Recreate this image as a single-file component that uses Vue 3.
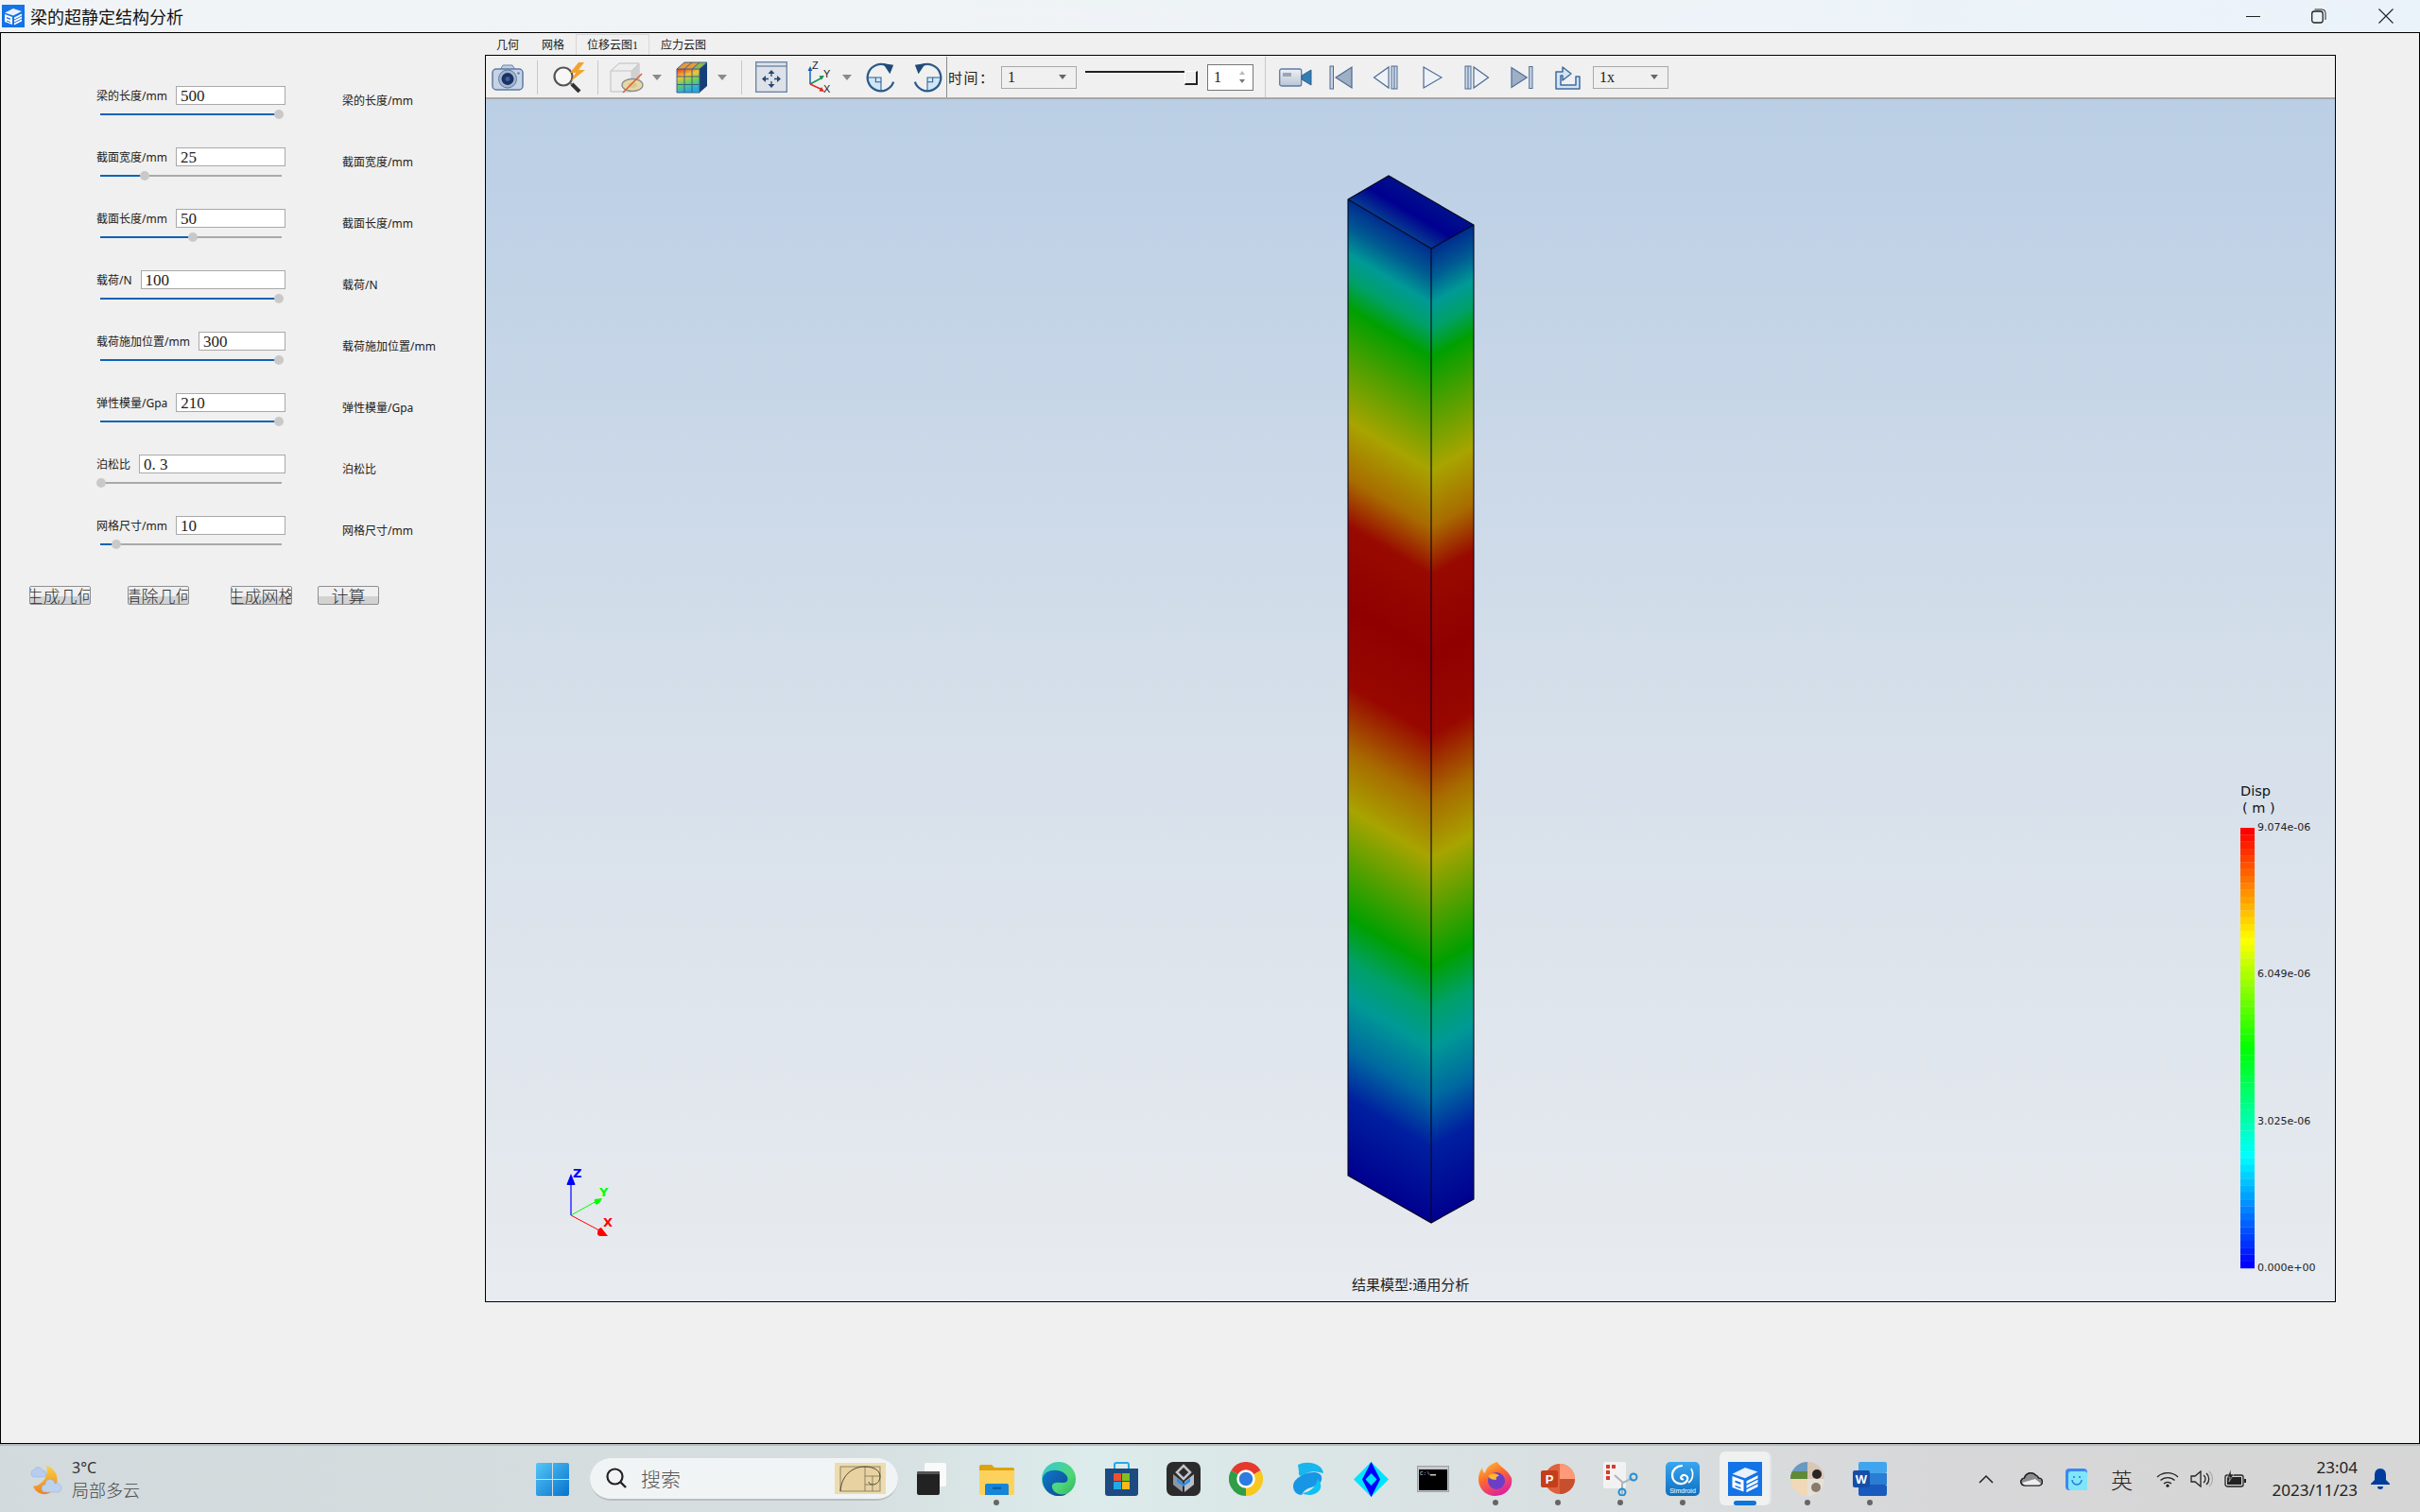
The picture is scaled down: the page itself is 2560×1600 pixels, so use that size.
<script setup>
const params = [
  { label: '梁的长度/mm', value: '500', pct: 98.4 },
  { label: '截面宽度/mm', value: '25', pct: 24.5 },
  { label: '截面长度/mm', value: '50', pct: 51 },
  { label: '载荷/N', value: '100', pct: 98.4 },
  { label: '载荷施加位置/mm', value: '300', pct: 98.4 },
  { label: '弹性模量/Gpa', value: '210', pct: 98.4 },
  { label: '泊松比', value: '0. 3', pct: 0.5 },
  { label: '网格尺寸/mm', value: '10', pct: 8.9 },
]
const actions = ['生成几何', '清除几何', '生成网格', '计算']
const tabs = ['几何', '网格', '位移云图1', '应力云图']

// contour colours along the beam, d = distance below the top edge in px
const beamStops = [
  [0, '#002c90'], [30, '#005c92'], [58, '#009a96'], [85, '#00a068'], [115, '#00a000'],
  [170, '#50a000'], [235, '#a8a400'], [295, '#a86c00'], [345, '#980a00'], [430, '#900000'],
  [515, '#980800'], [585, '#a86c00'], [645, '#a8a400'], [700, '#58a000'], [760, '#00a000'],
  [805, '#00a068'], [845, '#009a96'], [900, '#0068a0'], [950, '#0020a0'], [1033, '#00008e'],
].map(([d, color]) => ({ offset: d / 1033, color }))

const jet = (t) => {
  const seg = [[0, 0, 255], [0, 255, 255], [0, 255, 0], [255, 255, 0], [255, 0, 0]]
  const i = Math.min(3, Math.floor(t * 4))
  const f = t * 4 - i
  const c = seg[i].map((v, k) => Math.round(v + (seg[i + 1][k] - v) * f))
  return `rgb(${c[0]},${c[1]},${c[2]})`
}
const legendSteps = Array.from({ length: 64 }, (_, i) => ({
  y: 876 + i * (466 / 64),
  color: jet(1 - i / 63),
}))
const legendLabels = [
  { text: '9.074e-06', y: 879 },
  { text: '6.049e-06', y: 1034 },
  { text: '3.025e-06', y: 1190 },
  { text: '0.000e+00', y: 1345 },
]
const rotateArc = 'M31 22A15 15 0 1 1 23 3.500'
</script>

<template>
  <div class="screen">
    <header class="title">
      <svg class="title-icon" width="24" height="24" viewBox="0 0 24 24">
        <defs>
          <symbol id="app-mark" viewBox="0 0 24 24">
            <rect width="24" height="24" fill="#1473e6" />
            <path d="M3 8.5 12 4l9 3-9 4.5z" fill="#fff" opacity=".9" />
            <path d="M3 10l8 3v8l-8-3z" fill="#fff" />
            <path d="M5 13l4 1.5V16l-4-1.5zM5 16.5l4 1.5V19l-4-1.5z" fill="#1473e6" />
            <path d="M13 13.5l8-4v2l-8 4zM13 16.5l8-4v2l-8 4zM13 19.5l8-4v2l-8 4z" fill="#fff" />
          </symbol>
        </defs>
        <use href="#app-mark" />
      </svg>
      <span class="title-text">梁的超静定结构分析</span>
      <div class="win-buttons">
        <svg width="16" height="16" viewBox="0 0 16 16"><path d="M0 8.5h15" stroke="#222" fill="none" /></svg>
        <svg width="16" height="16" viewBox="0 0 16 16"><rect x=".7" y="3" width="11.5" height="12" rx="2.5" fill="none" stroke="#222" stroke-width="1.3" /><path d="M3.5 1h8a3.5 3.5 0 0 1 3.5 3.5V12" fill="none" stroke="#222" /></svg>
        <svg class="win-close" width="16" height="16" viewBox="0 0 16 16"><path d="M.5.5l15 15M15.500.5l-15 15" stroke="#222" fill="none" stroke-width="1.1" /></svg>
      </div>
    </header>

    <main class="window">
      <section class="form">
        <div v-for="p in params" :key="p.label" class="param">
          <div class="param-left">
            <div class="param-head">
              <label>{{ p.label }}</label>
              <input class="param-input" :value="p.value" readonly />
            </div>
            <div class="slider">
              <div class="slider-fill" :style="{ width: p.pct + '%' }"></div>
              <div class="slider-knob" :style="{ left: p.pct + '%' }"></div>
            </div>
          </div>
          <span class="param-right">{{ p.label }}</span>
        </div>
        <div class="actions">
          <button v-for="a in actions" :key="a" class="action">{{ a }}</button>
        </div>
      </section>

      <section class="stage">
        <nav class="tabs">
          <span v-for="(t, i) in tabs" :key="t" class="tab" :class="{ active: i === 2 }">{{ t }}</span>
        </nav>
        <div class="viewer">
          <div class="toolbar">
            <!-- camera -->
            <svg class="ml6" width="34" height="28" viewBox="0 0 34 28">
              <path d="M9 6l3-5h10l3 5" fill="#c3cfdf" stroke="#6a86aa" />
              <rect x="1" y="5" width="32" height="22" rx="4" fill="#c6d3e5" stroke="#5c7ba4" stroke-width="1.5" />
              <circle cx="17" cy="15.500" r="9.500" fill="#a4b6cf" stroke="#5c7ba4" />
              <circle cx="17" cy="15.500" r="6.500" fill="#1b3263" />
              <circle cx="17" cy="15.500" r="2.500" fill="#3f5f99" />
              <circle cx="28.500" cy="9.500" r="1.200" fill="#5c7ba4" />
            </svg>
            <i class="sep ml14"></i>
            <!-- search with flash -->
            <svg class="ml14" width="37" height="32" viewBox="0 0 37 32">
              <circle cx="13" cy="15" r="9.500" fill="#f7f7f7" stroke="#555" stroke-width="2.200" />
              <path d="M20 22l2 1" stroke="#777" stroke-width="2.500" />
              <path d="M22 23l8 8" stroke="#333" stroke-width="4" />
              <path d="M29 0L20 11h6l-5 9 15-12h-7l6-8z" fill="#f3a42e" />
            </svg>
            <i class="sep ml12"></i>
            <!-- section box -->
            <svg class="ml12" width="37" height="34" viewBox="0 0 37 34">
              <path d="M1 10l9-8h21v22l-8 8H1z" fill="#eeeeee" stroke="#bdbdbd" />
              <path d="M1 10h22v22M23 10l8-8" fill="none" stroke="#c4c4c4" />
              <path d="M23 10l8-8v22l-8 8z" fill="#d0d0d0" />
              <ellipse cx="24" cy="25" rx="11" ry="6.500" fill="#e9d9a0" stroke="#8b8f96" stroke-width="1.300" />
              <ellipse cx="24" cy="25" rx="5" ry="3" fill="#d7c79a" />
              <path d="M14 33L34 13" stroke="#d9623a" stroke-width="1.600" />
            </svg>
            <i class="caret ml8"></i>
            <!-- contour cube -->
            <svg class="ml15" width="34" height="34" viewBox="0 0 34 34">
              <defs>
                <linearGradient id="cubeFront" x1="0" y1="0" x2="0.300" y2="1">
                  <stop offset="0" stop-color="#e8342a" />
                  <stop offset=".35" stop-color="#f5c23a" />
                  <stop offset=".65" stop-color="#66d060" />
                  <stop offset="1" stop-color="#28a8e0" />
                </linearGradient>
              </defs>
              <path d="M1 8L9 1h24L25 8z" fill="#8fb84e" />
              <path d="M9 1h8L9 8H1zM17 1h8l-8 7H9z" fill="#e89a3a" />
              <rect x="1" y="8" width="24" height="25" fill="url(#cubeFront)" />
              <path d="M25 8l8-7v25l-8 7z" fill="#163f78" />
              <path d="M1 8h24v25H1zM9 8v25M17 8v25M1 16h24M1 24.500h24M25 8l8-7H9L1 8M9 8l8-7M17 8l8-7" fill="none" stroke="#2f5a86" stroke-width=".9" />
            </svg>
            <i class="caret ml10"></i>
            <i class="sep ml15"></i>
            <!-- fit view -->
            <svg class="ml14" width="34" height="33" viewBox="0 0 34 33">
              <rect x=".7" y=".7" width="32.600" height="31.600" fill="#dde1e8" stroke="#6f87a6" stroke-width="1.400" />
              <path d="M1 5h32" stroke="#6f87a6" stroke-width="1.400" />
              <path d="M17 9l-3.500 4h7zM17 28l-3.500-4h7zM7 18.500l4-3.500v7zM27 18.500l-4-3.500v7z" fill="#26476f" />
              <path d="M17 12v4M17 21v4M10 18.500h4M20 18.500h4" stroke="#26476f" stroke-width="1.300" />
            </svg>
            <!-- axes -->
            <svg class="ml19" width="28" height="34" viewBox="0 0 28 34">
              <path d="M5 24V9" stroke="#1560c0" stroke-width="1.500" />
              <path d="M5 5l-2.500 5h5z" fill="#1560c0" />
              <path d="M5 24l13-7" stroke="#14934c" stroke-width="1.500" />
              <path d="M20 15l-5.500.2 2.500 4.300z" fill="#14934c" />
              <path d="M5 24l13 6" stroke="#e02b20" stroke-width="1.500" />
              <path d="M20 32l-3-5-2.500 4.500z" fill="#e02b20" />
              <text class="axis-tool" x="7" y="8">Z</text>
              <text class="axis-tool" x="19" y="17">Y</text>
              <text class="axis-tool" x="19" y="33">X</text>
            </svg>
            <i class="caret ml11"></i>
            <!-- rotate cw / ccw -->
            <svg class="ml15" width="32" height="32" viewBox="0 0 34 34">
              <path d="M2 17h15v15A15 15 0 0 1 2 17z" fill="#cfe6f7" />
              <path d="M2 17h15v15M11 17v5h6" fill="none" stroke="#2f5d8c" stroke-width="1.100" />
              <path :d="rotateArc" fill="none" stroke="#2c5a88" stroke-width="2.400" />
              <path d="M19 1l12 2-4 10z" fill="#1f4a78" />
            </svg>
            <svg class="ml17 mirror" width="32" height="32" viewBox="0 0 34 34">
              <path d="M2 17h15v15A15 15 0 0 1 2 17z" fill="#cfe6f7" />
              <path d="M2 17h15v15M11 17v5h6" fill="none" stroke="#2f5d8c" stroke-width="1.100" />
              <path :d="rotateArc" fill="none" stroke="#2c5a88" stroke-width="2.400" />
              <path d="M19 1l12 2-4 10z" fill="#1f4a78" />
            </svg>
            <i class="divider ml4"></i>
            <span class="time-label ml1">时间：</span>
            <div class="combo combo-time ml10"><span>1</span><i class="combo-arrow"></i></div>
            <div class="time-slider ml9"><i></i></div>
            <div class="spin ml10">
              <span>1</span>
              <div class="spin-arrows"><i class="up"></i><i class="down"></i></div>
            </div>
            <i class="sep tall ml12"></i>
            <!-- video -->
            <svg class="ml14" width="35" height="20" viewBox="0 0 35 20">
              <defs>
                <linearGradient id="vid" x1="0" y1="0" x2="0" y2="1">
                  <stop offset="0" stop-color="#eef1f6" />
                  <stop offset="1" stop-color="#b9c4d4" />
                </linearGradient>
              </defs>
              <rect x=".7" y="1" width="23" height="18" rx="2" fill="url(#vid)" stroke="#5c7ba4" stroke-width="1.300" />
              <rect x="4" y="5" width="9" height="4" fill="#9aa5b5" />
              <path d="M24 8l10-6v16l-10-6z" fill="#2f7fb5" stroke="#375f8f" />
            </svg>
            <!-- playback -->
            <svg class="ml18" width="25" height="26" viewBox="0 0 25 26">
              <rect x="1" y="1" width="3.500" height="24" fill="#c7d1df" stroke="#4c6b96" />
              <path d="M24 2v22L7 13z" fill="#9fafc4" stroke="#4c6b96" stroke-width="1.200" />
            </svg>
            <svg class="ml21" width="28" height="26" viewBox="0 0 28 26">
              <path d="M17 2v22L1.500 13z" fill="#eef1f6" stroke="#4c6b96" stroke-width="1.200" />
              <rect x="20" y="1" width="6" height="24" fill="#d2dae6" stroke="#4c6b96" />
              <path d="M23 1v24" stroke="#4c6b96" />
            </svg>
            <svg class="ml25" width="21" height="26" viewBox="0 0 21 26">
              <path d="M1 2l19 11L1 24z" fill="#eef1f6" stroke="#4c6b96" stroke-width="1.200" />
            </svg>
            <svg class="ml22 mirror" width="28" height="26" viewBox="0 0 28 26">
              <path d="M17 2v22L1.500 13z" fill="#eef1f6" stroke="#4c6b96" stroke-width="1.200" />
              <rect x="20" y="1" width="6" height="24" fill="#d2dae6" stroke="#4c6b96" />
              <path d="M23 1v24" stroke="#4c6b96" />
            </svg>
            <svg class="ml22 mirror" width="24" height="26" viewBox="0 0 25 26">
              <rect x="1" y="1" width="3.500" height="24" fill="#c7d1df" stroke="#4c6b96" />
              <path d="M24 2v22L7 13z" fill="#9fafc4" stroke="#4c6b96" stroke-width="1.200" />
            </svg>
            <!-- export -->
            <svg class="ml22" width="28" height="27" viewBox="0 0 28 27">
              <path d="M2 8h7V3l9 7-9 7v-5H7v10h16v-9h4v13H2z" fill="#d5e4f3" stroke="#3f6b9e" stroke-width="1.500" stroke-linejoin="round" />
            </svg>
            <div class="combo combo-speed ml13"><span>1x</span><i class="combo-arrow"></i></div>
          </div>

          <svg class="scene" viewBox="514 105 1956 1272" width="1956" height="1272">
            <defs>
              <linearGradient id="sky" x1="0" y1="0" x2="0" y2="1">
                <stop offset="0" stop-color="#bacee5" />
                <stop offset=".5" stop-color="#d5dfea" />
                <stop offset="1" stop-color="#e8ebef" />
              </linearGradient>
              <linearGradient id="faceLeft" gradientUnits="userSpaceOnUse" x1="0" y1="0" x2="0" y2="1033" gradientTransform="translate(1426 211) skewY(30.500)">
                <stop v-for="s in beamStops" :key="s.offset" :offset="s.offset" :stop-color="s.color" />
              </linearGradient>
              <linearGradient id="faceRight" gradientUnits="userSpaceOnUse" x1="0" y1="0" x2="0" y2="1033" gradientTransform="translate(1514 263) skewY(-29)">
                <stop v-for="s in beamStops" :key="s.offset" :offset="s.offset" :stop-color="s.color" />
              </linearGradient>
              <linearGradient id="faceTop" gradientUnits="userSpaceOnUse" x1="1470" y1="237" x2="1492" y2="200">
                <stop offset="0" stop-color="#063c90" />
                <stop offset=".5" stop-color="#000090" />
                <stop offset="1" stop-color="#00108c" />
              </linearGradient>
            </defs>
            <rect x="514" y="105" width="1956" height="1272" fill="url(#sky)" />

            <path d="M1426 211L1514 263V1294L1426 1244z" fill="url(#faceLeft)" />
            <path d="M1514 263L1559 238V1269L1514 1294z" fill="url(#faceRight)" />
            <path d="M1426 211L1469 186L1559 238L1514 263z" fill="url(#faceTop)" />
            <path d="M1426 211L1469 186L1559 238V1269L1514 1294L1426 1244zM1426 211L1514 263L1559 238M1514 263V1294" fill="none" stroke="#05051c" stroke-width="1.100" />

            <!-- triad -->
            <path d="M604 1286V1250" stroke="#0000ff" stroke-width="1.200" />
            <path d="M604 1242l-4 10q-1 1.500 0 2h8q1-.5 0-2z" fill="#0000ff" />
            <path d="M604 1286L631 1271" stroke="#00ff00" />
            <path d="M637 1268l-8 1q-1 4 2 6 4-2 6-7z" fill="#00ff00" />
            <path d="M604 1286L634 1302" stroke="#ff0000" />
            <path d="M643 1308l-7-9q-4 1-4 6 0 3 3 3z" fill="#ff0000" />
            <text class="triad tz" x="606" y="1246">Z</text>
            <text class="triad ty" x="634" y="1266">Y</text>
            <text class="triad tx" x="638" y="1298">X</text>

            <!-- legend -->
            <text class="legend-title" x="2370" y="842">Disp</text>
            <text class="legend-title" x="2372" y="860">( m )</text>
            <rect v-for="s in legendSteps" :key="s.y" x="2370" :y="s.y" width="15" height="7.500" :fill="s.color" />
            <text v-for="l in legendLabels" :key="l.text" class="legend-label" x="2388" :y="l.y">{{ l.text }}</text>

            <text class="model-note" x="1430" y="1365">结果模型:通用分析</text>
          </svg>
        </div>
      </section>
    </main>

    <footer class="taskbar">
      <div class="weather">
        <svg width="38" height="34" viewBox="0 0 38 34">
          <defs>
            <linearGradient id="moon" x1="0" y1="0" x2="0" y2="1">
              <stop offset="0" stop-color="#f9cf45" />
              <stop offset="1" stop-color="#ee8420" />
            </linearGradient>
          </defs>
          <path d="M20 3a15.500 15.500 0 0 1 0 30A13 13 0 0 1 6 25 17 17 0 0 0 20 3z" fill="url(#moon)" />
          <path d="M6 15a4.500 4.500 0 0 1 1-8 5 5 0 0 1 9 1 3.500 3.500 0 0 1 1 7z" fill="#b6cdee" stroke="#8daee0" stroke-width=".5" />
          <path d="M19 31a4 4 0 0 1 0-8 5 5 0 0 1 10-1 4.500 4.500 0 0 1 4 9z" fill="#bdd2f0" stroke="#8daee0" stroke-width=".5" />
        </svg>
        <div class="weather-text">
          <span>3°C</span>
          <span class="weather-sub">局部多云</span>
        </div>
      </div>

      <div class="task-center">
        <svg width="35" height="35" viewBox="0 0 35 35">
          <defs>
            <linearGradient id="win" x1="0" y1="0" x2="1" y2="1">
              <stop offset="0" stop-color="#55c6f8" />
              <stop offset="1" stop-color="#0672cc" />
            </linearGradient>
          </defs>
          <path d="M0 2q0-2 2-2h15v17H0zM18 0h15q2 0 2 2v15H18zM0 18h17v17H2q-2 0-2-2zM18 18h17v15q0 2-2 2H18z" fill="url(#win)" />
        </svg>
        <div class="search">
          <svg width="22" height="22" viewBox="0 0 22 22"><circle cx="9.500" cy="9.500" r="8" fill="none" stroke="#222" stroke-width="2.200" /><path d="M15 15l6 6" stroke="#222" stroke-width="2.400" /></svg>
          <span class="search-text">搜索</span>
          <svg class="search-art" width="54" height="33" viewBox="0 0 54 33">
            <rect width="54" height="33" fill="#eedcae" />
            <rect x="6" y="4" width="42" height="26" fill="#e8d3a0" stroke="#77705f" stroke-width=".8" />
            <path d="M32 4v26M32 14h16M40 14v16M32 23h8" stroke="#77705f" stroke-width=".8" fill="none" />
            <path d="M6 30C7 14 18 4 32 4c9 0 16 4 16 10 0 6-4 9-8 9-3 0-4-2-4-3" fill="none" stroke="#4f4a3e" stroke-width="1" />
          </svg>
        </div>
        <div class="cell cell-first">
          <svg width="31" height="34" viewBox="0 0 31 34">
            <rect x="8" y="0" width="23" height="25" rx="2" fill="#fafafa" />
            <rect x="0" y="9" width="24" height="25" rx="2" fill="#222" />
            <path d="M0 11q0-2 2-2h22v3H0z" fill="#555" />
          </svg>
        </div>
        <div class="cell cell-apps has-dot">
          <svg width="37" height="33" viewBox="0 0 37 33">
            <path d="M0 3q0-2 2-2h11l3 3h19q2 0 2 2v4H0z" fill="#dea20e" />
            <path d="M0 7h37v24q0 2-2 2H2q-2 0-2-2z" fill="#fcd25c" />
            <path d="M6 33V23q0-2 2-2h21q2 0 2 2v10z" fill="#1585d8" />
            <rect x="14" y="24.500" width="9" height="2.500" fill="#0c5fa6" />
          </svg>
        </div>
        <div class="cell">
          <svg width="36" height="36" viewBox="0 0 36 36">
            <defs>
              <linearGradient id="edgeA" x1="0" y1="0" x2="1" y2="1">
                <stop offset="0" stop-color="#36c8d8" />
                <stop offset=".6" stop-color="#4fd878" />
                <stop offset="1" stop-color="#2fb060" />
              </linearGradient>
              <linearGradient id="edgeB" x1="0" y1="0" x2="1" y2="1">
                <stop offset="0" stop-color="#0f78c8" />
                <stop offset="1" stop-color="#0c4a94" />
              </linearGradient>
            </defs>
            <circle cx="18" cy="18" r="18" fill="url(#edgeA)" />
            <path d="M1 17C3 8 18 6 25 13c4 4 3 9-2 9-4 0-13-2-12 5 .5 4 6 9 15 7-3 2-5 2-8 2C8 36 0 28 1 17z" fill="url(#edgeB)" />
          </svg>
        </div>
        <div class="cell">
          <svg width="35" height="36" viewBox="0 0 35 36">
            <path d="M10 8V3q0-2 2-2h11q2 0 2 2v5" fill="none" stroke="#2aa7e8" stroke-width="2" />
            <path d="M0 7h35v26q0 3-3 3H3q-3 0-3-3z" fill="#1d4a80" />
            <rect x="9" y="12" width="8" height="8" fill="#f05030" /><rect x="18" y="12" width="8" height="8" fill="#80c020" />
            <rect x="9" y="21" width="8" height="8" fill="#20a8e8" /><rect x="18" y="21" width="8" height="8" fill="#fcb818" />
          </svg>
        </div>
        <div class="cell">
          <svg width="36" height="36" viewBox="0 0 36 36">
            <rect width="36" height="36" rx="7" fill="#2b2b2b" />
            <path d="M18 4l7 7-7 7-7-7z" fill="none" stroke="#c0c4cc" stroke-width="2.500" />
            <path d="M7 13l10 8v11l-10-8z" fill="#8f96a3" />
            <path d="M29 13l-10 8v11l10-8z" fill="#b8bec8" />
            <path d="M11 17l7 6 7-6v4l-7 5-7-5z" fill="#2f8fe0" />
          </svg>
        </div>
        <div class="cell">
          <svg width="36" height="36" viewBox="0 0 36 36">
            <path d="M18 18L2.400 9A18 18 0 0 1 33.600 9z" fill="#e5392d" />
            <path d="M18 18L33.600 9A18 18 0 0 1 18 36z" fill="#f8c81f" />
            <path d="M18 18V36A18 18 0 0 1 2.400 9z" fill="#2f9e47" />
            <circle cx="18" cy="18" r="8.500" fill="#2c7be0" stroke="#fff" stroke-width="2.500" />
          </svg>
        </div>
        <div class="cell">
          <svg width="34" height="36" viewBox="0 0 34 36">
            <path d="M6 3Q14 -1 24 2 32 5 33 12 20 8 14 13 6 18 7 10z" fill="#18b6ee" />
            <path d="M1 26c0-6 5-10 12-13 6-3 20-4 18 6-1 5-8 7-14 9-4 2-6 4-7 7C5 35 1 31 1 26z" fill="#1796e6" />
            <path d="M27 18c7 8 2 16-8 17-4 0-7-1-9-2 6 0 15-5 17-15z" fill="#10c0f0" />
          </svg>
        </div>
        <div class="cell">
          <svg width="37" height="37" viewBox="0 0 37 37">
            <path d="M18.500 0L37 18.500 18.500 37 0 18.500z" fill="#00e5ff" />
            <path d="M18.500 0v37L9 18.500zM18.500 0L28 18.500 18.500 37z" fill="#0000ff" />
            <path d="M18.500 12l6 6.500-6 6.500-6-6.500z" fill="#00e5ff" />
          </svg>
        </div>
        <div class="cell">
          <svg width="34" height="28" viewBox="0 0 34 28">
            <rect x=".5" y=".5" width="33" height="27" fill="#c4c8cc" stroke="#9aa0a6" />
            <rect x="2" y="4" width="30" height="22" fill="#000" />
            <text class="cmd-text" x="3" y="10">C:\</text>
            <rect x="14" y="9" width="6" height="1.500" fill="#ccc" />
          </svg>
        </div>
        <div class="cell has-dot">
          <svg width="36" height="36" viewBox="0 0 36 36">
            <defs>
              <linearGradient id="fox" x1="0" y1="0" x2="0.500" y2="1">
                <stop offset="0" stop-color="#ffcf30" />
                <stop offset=".5" stop-color="#ff6a2e" />
                <stop offset="1" stop-color="#e0249a" />
              </linearGradient>
            </defs>
            <path d="M20 0c2 5 11 8 15 17 2 10-6 19-17 19S0 28 0 18C0 13 2 9 4 6c0 3 1 5 3 6 1-6 6-10 13-12z" fill="url(#fox)" />
            <circle cx="19" cy="20" r="9" fill="#6a3fc8" />
            <path d="M10 15c4-4 10-3 12 0-3 0-4 2-3 4-4 0-7-1-9-4z" fill="#ffb830" />
          </svg>
        </div>
        <div class="cell has-dot">
          <svg width="36" height="36" viewBox="0 0 36 36">
            <circle cx="20" cy="18" r="16" fill="#e0603c" />
            <path d="M20 2a16 16 0 0 1 16 16H20z" fill="#ff9a78" />
            <path d="M20 18h16a16 16 0 0 1-16 16z" fill="#c84f2e" />
            <rect x="0" y="9" width="18" height="18" rx="2" fill="#c43e1c" />
            <text class="office-letter" x="9" y="23" text-anchor="middle">P</text>
          </svg>
        </div>
        <div class="cell has-dot">
          <svg width="37" height="36" viewBox="0 0 37 36">
            <rect x="0" y="0" width="24" height="28" rx="2" fill="#f2f2f2" />
            <path d="M3 3h4v4H3zM9 3h4v4H9zM3 9h4v4H3zM3 15h4v4H3z" fill="#d83b2b" />
            <path d="M12 14l9 8 10-5M20 36V22" stroke="#b0b4ba" stroke-width="2" fill="none" />
            <circle cx="32" cy="16" r="3.500" fill="none" stroke="#1d8fd8" stroke-width="2" />
            <circle cx="20" cy="32" r="3.500" fill="none" stroke="#1d8fd8" stroke-width="2" />
          </svg>
        </div>
        <div class="cell has-dot">
          <svg width="36" height="36" viewBox="0 0 36 36">
            <defs>
              <linearGradient id="sim" x1="0" y1="0" x2="0" y2="1">
                <stop offset="0" stop-color="#38a6f0" />
                <stop offset="1" stop-color="#0f6fc0" />
              </linearGradient>
            </defs>
            <rect width="36" height="36" rx="5" fill="url(#sim)" />
            <path d="M18 4c-7 0-11 5-11 10 0 6 5 10 11 9 4-1 6-4 5-7-1-2-4-3-6-1s0 4 2 3" fill="none" stroke="#fff" stroke-width="2.200" />
            <path d="M27 7c3 5 2 12-3 15" fill="none" stroke="#fff" stroke-width="1.600" />
            <text class="sim-text" x="18" y="33" text-anchor="middle">Simdroid</text>
          </svg>
        </div>
        <div class="cell active">
          <svg width="36" height="36" viewBox="0 0 24 24"><use href="#app-mark" /></svg>
        </div>
        <div class="cell has-dot">
          <svg width="36" height="36" viewBox="0 0 36 36">
            <defs><clipPath id="photo"><circle cx="18" cy="18" r="18" /></clipPath></defs>
            <g clip-path="url(#photo)">
              <rect width="18" height="18" fill="#6a9ac0" />
              <rect y="10" width="18" height="8" fill="#5e8a3a" />
              <rect x="18" width="18" height="18" fill="#d9c6b4" />
              <circle cx="28" cy="13" r="5" fill="#2a2422" />
              <rect y="18" width="18" height="18" fill="#f0d8b8" />
              <rect x="18" y="18" width="18" height="18" fill="#e6e0d8" />
              <circle cx="27" cy="27" r="5" fill="#8a7a68" />
            </g>
          </svg>
        </div>
        <div class="cell has-dot">
          <svg width="36" height="36" viewBox="0 0 36 36">
            <rect x="6" y="0" width="30" height="12" rx="2" fill="#41a5ee" />
            <rect x="6" y="12" width="30" height="12" fill="#2b7cd3" />
            <rect x="6" y="24" width="30" height="12" rx="2" fill="#185abd" />
            <rect x="0" y="9" width="18" height="18" rx="2" fill="#144ea8" />
            <text class="office-letter" x="9" y="23" text-anchor="middle">W</text>
          </svg>
        </div>
      </div>

      <div class="tray">
        <svg class="tray-chevron" width="16" height="10" viewBox="0 0 16 10"><path d="M1 9l7-7 7 7" fill="none" stroke="#222" stroke-width="1.500" /></svg>
        <svg class="tray-cloud" width="24" height="16" viewBox="0 0 24 16">
          <path d="M5 15a4 4 0 0 1-.5-8 7 7 0 0 1 12-3 5 5 0 0 1 3 3 4 4 0 0 1 0 8z" fill="#8c8c8c" stroke="#222" stroke-width="1.200" />
          <path d="M2 12l14-4 6 5-2 2H5z" fill="#eee" />
          <path d="M5 15a4 4 0 0 1-.5-8 7 7 0 0 1 12-3 5 5 0 0 1 3 3 4 4 0 0 1 0 8z" fill="none" stroke="#222" stroke-width="1.200" />
        </svg>
        <svg class="tray-smile" width="23" height="23" viewBox="0 0 23 23">
          <rect width="23" height="23" rx="4" fill="#3c88f2" />
          <rect x="3" y="3" width="20" height="20" rx="3" fill="#7fe6f8" />
          <path d="M7 12a5 5 0 0 0 10 0" fill="none" stroke="#2a6fe0" stroke-width="1.400" />
          <circle cx="9" cy="9" r="1" fill="#2a6fe0" /><circle cx="15" cy="9" r="1" fill="#2a6fe0" />
        </svg>
        <span class="tray-ime">英</span>
        <svg class="tray-wifi" width="24" height="17" viewBox="0 0 24 17">
          <path d="M1 6a16 16 0 0 1 22 0M4.500 9.500a11 11 0 0 1 15 0M8 13a6 6 0 0 1 8 0" fill="none" stroke="#222" stroke-width="1.300" />
          <circle cx="12" cy="15.200" r="1.600" fill="#222" />
        </svg>
        <svg class="tray-sound" width="24" height="18" viewBox="0 0 24 18">
          <path d="M1 6h4l6-5v16l-6-5H1z" fill="none" stroke="#222" stroke-width="1.300" />
          <path d="M14 5a5 5 0 0 1 0 8M17 3a8 8 0 0 1 0 12" fill="none" stroke="#222" stroke-width="1.300" />
          <path d="M20 1a11 11 0 0 1 0 16" fill="none" stroke="#aaa" stroke-width="1.200" />
        </svg>
        <svg class="tray-battery" width="24" height="20" viewBox="0 0 24 20">
          <rect x="1" y="6" width="19" height="12" rx="2" fill="none" stroke="#222" stroke-width="1.300" />
          <rect x="3" y="8" width="15" height="8" fill="#222" />
          <path d="M21 10h2v4h-2z" fill="#222" />
          <path d="M7 0L3 8h3l-1 5 5-8H7z" fill="#222" stroke="#d6d6d6" stroke-width=".6" />
        </svg>
        <div class="clock">
          <span>23:04</span>
          <span>2023/11/23</span>
        </div>
        <svg class="tray-bell" width="20" height="23" viewBox="0 0 20 23">
          <path d="M10 0c4 0 6 3 6 7v5l4 4v1H0v-1l4-4V7c0-4 2-7 6-7z" fill="#003c9e" />
          <path d="M7 19h6a3 3 0 0 1-6 0z" fill="#003c9e" />
        </svg>
      </div>
    </footer>
  </div>
</template>

<style scoped>
.screen {
  width: 2560px;
  height: 1600px;
  display: flex;
  flex-direction: column;
  font-family: "Noto Sans", "Noto Sans CJK SC", sans-serif;
  color: #222;
  overflow: hidden;
}

.title {
  height: 34px;
  flex: none;
  display: flex;
  align-items: center;
  padding-left: 2px;
  background: linear-gradient(90deg, #f1f4f6, #eef3f7 60%, #ebf3fa);
}
.title-icon { flex: none; }
.title-text {
  margin-left: 6px;
  font-size: 18px;
  font-family: "Noto Sans CJK SC", sans-serif;
  color: #111;
}
.win-buttons {
  margin-left: auto;
  display: flex;
  gap: 53px;
  padding-right: 28px;
}
.win-close { margin-left: 2px; }

.window {
  flex: 1;
  min-height: 0;
  display: flex;
  border: 1px solid #000;
  background: #f0f0f0;
}

.form {
  width: 512px;
  flex: none;
  box-sizing: border-box;
  padding-top: 56px;
}
.param {
  height: 65px;
  display: flex;
  margin-left: 101px;
  font-size: 12px;
}
.param-left { width: 200px; flex: none; }
.param-head {
  display: flex;
  align-items: center;
  gap: 9px;
  height: 20px;
}
.param-head label { white-space: nowrap; }
.param-input {
  flex: 1;
  min-width: 0;
  height: 20px;
  box-sizing: border-box;
  border: 1px solid #a9a9a9;
  background: #fff;
  padding: 2px 0 0 4px;
  font: 17px "Liberation Serif", serif;
  color: #222;
  outline: none;
}
.slider {
  position: relative;
  margin: 9px 4px 0 4px;
  width: 192px;
  height: 2px;
  background: #a9a9a9;
}
.slider-fill {
  height: 100%;
  background: #0d63b5;
}
.slider-knob {
  position: absolute;
  top: -4px;
  width: 10px;
  height: 10px;
  margin-left: -5px;
  border-radius: 50%;
  background: #c9c9c9;
}
.param-right {
  margin: 8px 0 0 60px;
  line-height: 16px;
  white-space: nowrap;
}
.actions {
  display: flex;
  padding: 9px 0 0 30px;
}
.action {
  width: 65px;
  height: 20px;
  padding: 0;
  display: flex;
  align-items: center;
  justify-content: center;
  overflow: hidden;
  white-space: nowrap;
  border: 1px solid #8f8f8f;
  border-radius: 2px;
  background: linear-gradient(#f0f0f0 55%, #d2d2d2 55%);
  font: 18px "Liberation Serif", "Noto Sans CJK SC", serif;
  font-weight: 300;
  color: #333;
}
.action:nth-child(2) { margin-left: 39px; }
.action:nth-child(3) { margin-left: 44px; }
.action:nth-child(4) { margin-left: 27px; }

.stage {
  width: 1958px;
  flex: none;
  padding-top: 1px;
}
.tabs {
  height: 22px;
  display: flex;
  box-sizing: border-box;
  font: 12px "Liberation Serif", "Noto Sans CJK SC", serif;
}
.tab {
  height: 22px;
  padding: 0 12px;
  line-height: 24px;
  box-sizing: border-box;
  color: #222;
}
.tab.active {
  border: 1px solid #d8d8d8;
  border-bottom: none;
  padding: 0 11px;
  line-height: 23px;
}

.viewer {
  height: 1320px;
  box-sizing: border-box;
  border: 1px solid #000;
  display: flex;
  flex-direction: column;
}
.toolbar {
  height: 46px;
  flex: none;
  box-sizing: border-box;
  display: flex;
  align-items: center;
  padding-top: 1px;
  border-bottom: 2px solid #a8a8a8;
  background: #f0f0f0;
}
.scene { display: block; flex: none; }

.sep {
  width: 1px;
  height: 36px;
  flex: none;
  background: #c8c8c8;
}
.sep.tall { height: 43px; }
.divider {
  width: 1px;
  height: 43px;
  flex: none;
  background: #8a8a8a;
}
.caret {
  flex: none;
  border-left: 5px solid transparent;
  border-right: 5px solid transparent;
  border-top: 6px solid #8a8a8a;
}
.mirror { transform: scaleX(-1); }
.axis-tool {
  font: 11px "Liberation Sans", sans-serif;
  fill: #222;
}
.time-label {
  font: 15px "Liberation Serif", "Noto Sans CJK SC", serif;
  letter-spacing: 1.500px;
  white-space: nowrap;
  width: 46px;
  flex: none;
}
.combo {
  flex: none;
  height: 24px;
  box-sizing: border-box;
  border: 1px solid #a9a9a9;
  background: #f0f0f0;
  display: flex;
  align-items: center;
  padding: 0 10px 0 6px;
  font: 16px "Liberation Serif", serif;
}
.combo-time, .combo-speed { width: 80px; }
.combo-arrow {
  margin-left: auto;
  border-left: 4px solid transparent;
  border-right: 4px solid transparent;
  border-top: 5px solid #666;
}
.time-slider {
  position: relative;
  width: 119px;
  height: 15px;
  flex: none;
  margin-top: 1px;
  border-top: 2px solid #222;
  box-sizing: border-box;
}
.time-slider i {
  position: absolute;
  right: 0;
  top: -2px;
  width: 14px;
  height: 15px;
  box-sizing: border-box;
  border-right: 2px solid #222;
  border-bottom: 2px solid #222;
  border-left: 1px solid #fff;
  border-top: 1px solid #fff;
  background: #f0f0f0;
}
.spin {
  width: 49px;
  height: 28px;
  flex: none;
  box-sizing: border-box;
  border: 1px solid #777;
  background: #fff;
  display: flex;
  align-items: center;
  padding: 0 8px 0 6px;
  justify-content: space-between;
  font: 16px "Liberation Serif", serif;
}
.spin-arrows {
  display: flex;
  flex-direction: column;
  gap: 5px;
}
.spin-arrows i {
  border-left: 3px solid transparent;
  border-right: 3px solid transparent;
}
.spin-arrows .up { border-bottom: 4px solid #bbb; }
.spin-arrows .down { border-top: 4px solid #777; }

.ml1 { margin-left: 1px; }
.ml4 { margin-left: 4px; }
.ml6 { margin-left: 6px; }
.ml8 { margin-left: 8px; }
.ml9 { margin-left: 9px; }
.ml10 { margin-left: 10px; }
.ml11 { margin-left: 11px; }
.ml12 { margin-left: 12px; }
.ml13 { margin-left: 13px; }
.ml14 { margin-left: 14px; }
.ml15 { margin-left: 15px; }
.ml17 { margin-left: 17px; }
.ml18 { margin-left: 18px; }
.ml19 { margin-left: 19px; }
.ml21 { margin-left: 21px; }
.ml22 { margin-left: 22px; }
.ml25 { margin-left: 25px; }

.triad {
  font: bold 13px "DejaVu Sans", sans-serif;
}
.tz { fill: #0000ff; }
.ty { fill: #00ff00; }
.tx { fill: #ff0000; }
.legend-title {
  font: 14.500px "DejaVu Sans", sans-serif;
  fill: #111;
}
.legend-label {
  font: 11px "DejaVu Sans", sans-serif;
  fill: #222;
}
.model-note {
  font: 15px "Noto Sans CJK SC", sans-serif;
  fill: #222;
}

.taskbar {
  height: 72px;
  flex: none;
  box-sizing: border-box;
  border-top: 2px solid #b5babc;
  display: grid;
  grid-template-columns: 567px 1483px 1fr;
  background: linear-gradient(90deg, #d3dadd 0%, #d6dee0 35%, #dcebeb 45%, #d9dfe0 65%, #d7d7d9 80%, #d6d6d6 100%);
}
.weather {
  display: flex;
  align-items: center;
  gap: 9px;
  padding-left: 29px;
}
.weather-text {
  display: flex;
  flex-direction: column;
  font-size: 16px;
  line-height: 24px;
  color: #333;
}
.weather-sub {
  font-size: 18px;
  font-weight: 300;
  color: #444;
}
.task-center {
  display: flex;
  align-items: center;
}
.search {
  margin-left: 22px;
  width: 326px;
  height: 45px;
  flex: none;
  box-sizing: border-box;
  border-radius: 23px;
  background: #f1f4f5;
  border-bottom: 2px solid #b9bdbf;
  display: flex;
  align-items: center;
  padding-left: 17px;
}
.search-text {
  margin-left: 15px;
  font: 300 21px "Noto Sans CJK SC", sans-serif;
  color: #555;
}
.search-art { margin-left: auto; margin-right: 13px; }
.cell {
  position: relative;
  width: 66px;
  height: 70px;
  flex: none;
  display: flex;
  align-items: center;
  justify-content: center;
}
.cell-first { margin-left: 2px; }
.cell-apps { margin-left: 3px; }
.cell.has-dot::after {
  content: "";
  position: absolute;
  left: 30px;
  bottom: 7px;
  width: 6px;
  height: 6px;
  border-radius: 50%;
  background: #666;
}
.cell.active::before {
  content: "";
  position: absolute;
  left: 6px;
  top: 6px;
  width: 53px;
  height: 57px;
  border-radius: 6px;
  background: rgba(255, 255, 255, 0.6);
  box-shadow: 2px 0 0 rgba(255, 255, 255, 0.3);
}
.cell.active::after {
  content: "";
  position: absolute;
  left: 21px;
  top: 58px;
  width: 24px;
  height: 5px;
  border-radius: 3px;
  background: #0f75d6;
}
.cell svg { position: relative; }
.cmd-text {
  font: 6px "Liberation Mono", monospace;
  fill: #ddd;
}
.office-letter {
  font: bold 13px "Liberation Sans", sans-serif;
  fill: #fff;
}
.sim-text {
  font: 7px "Liberation Sans", sans-serif;
  fill: #fff;
}

.tray {
  display: flex;
  align-items: center;
  padding-left: 43px;
}
.tray-chevron, .tray-cloud, .tray-smile, .tray-wifi, .tray-sound, .tray-battery, .tray-bell { flex: none; }
.tray-cloud { margin-left: 28px; }
.tray-smile { margin-left: 24px; }
.tray-ime {
  margin-left: 25px;
  font: 300 23px "Noto Sans CJK SC", sans-serif;
}
.tray-wifi { margin-left: 25px; }
.tray-sound { margin-left: 12px; }
.tray-battery { margin-left: 12px; }
.clock {
  width: 117px;
  flex: none;
  display: flex;
  flex-direction: column;
  align-items: flex-end;
  font-size: 17px;
  line-height: 24px;
}
.tray-bell { margin-left: 14px; }
</style>

<style>
html, body {
  margin: 0;
  background: #f0f0f0;
}
</style>
